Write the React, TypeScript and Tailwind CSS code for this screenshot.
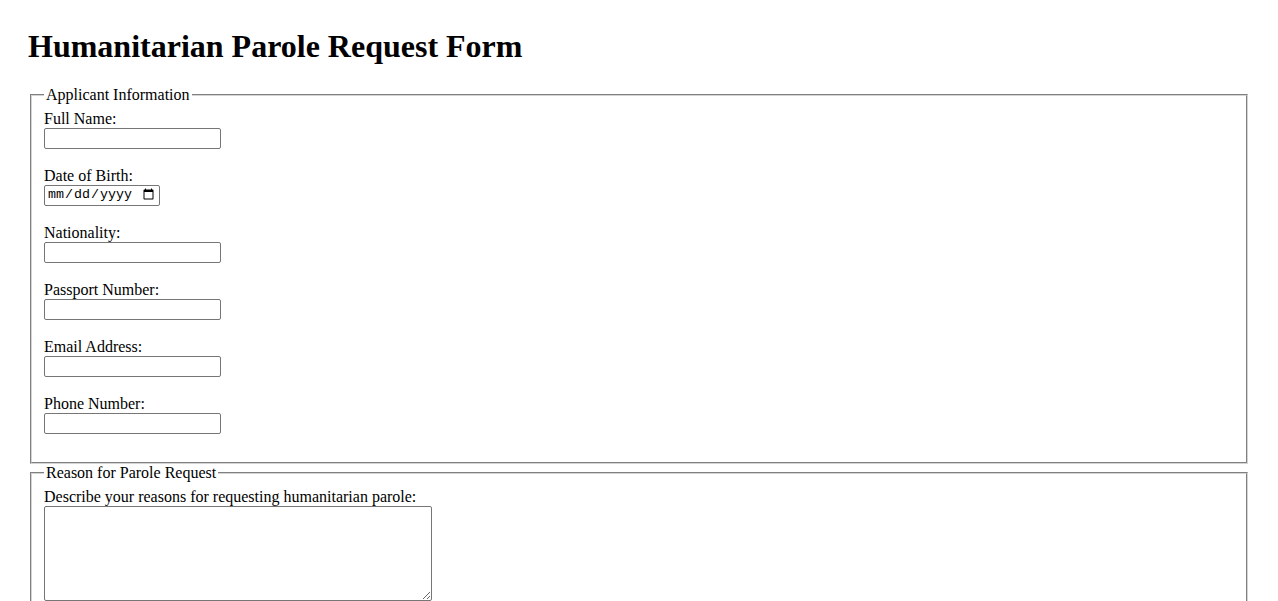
import { useState } from "react";

const APPLICANT_FIELDS = [
  { id: "fullName", label: "Full Name:", type: "text" },
  { id: "dob", label: "Date of Birth:", type: "date" },
  { id: "nationality", label: "Nationality:", type: "text" },
  { id: "passport", label: "Passport Number:", type: "text" },
  { id: "email", label: "Email Address:", type: "email" },
  { id: "phone", label: "Phone Number:", type: "tel" },
];

const inputBase =
  "-mt-px block h-[21px] rounded-[2px] border border-[#767676] bg-white px-[2px] py-[1px] text-[13.33px] text-black outline-none";

const fieldsetCls =
  "mx-[2px] border-2 border-[#d4d4d4] [border-style:groove] px-3 pt-[5.6px] pb-[10px]";

export default function App() {
  const [values, setValues] = useState<Record<string, string>>({});
  const [reason, setReason] = useState("");

  const set = (id: string, v: string) => setValues((s) => ({ ...s, [id]: v }));

  return (
    <div className="min-h-screen bg-white p-7 font-['Liberation_Serif',_'Times_New_Roman',_serif] text-[16px] leading-[18.4px] text-black">
      <h1 className="mb-[21.44px] text-[32px] leading-[36.8px] font-bold">
        Humanitarian Parole Request Form
      </h1>

      <form onSubmit={(e) => e.preventDefault()}>
        {/* Applicant */}
        <fieldset className={fieldsetCls}>
          <legend className="px-[2px]">Applicant Information</legend>
          {APPLICANT_FIELDS.map((f) => (
            <div key={f.id} className="mb-[18.6px]">
              <label htmlFor={f.id} className="block">
                {f.label}
              </label>
              {f.type === "date" ? (
                <input
                  id={f.id}
                  type="date"
                  value={values[f.id] ?? ""}
                  onChange={(e) => set(f.id, e.target.value)}
                  className={`${inputBase} w-[116px] font-['Liberation_Mono',_monospace]`}
                />
              ) : (
                <input
                  id={f.id}
                  type={f.type}
                  value={values[f.id] ?? ""}
                  onChange={(e) => set(f.id, e.target.value)}
                  className={`${inputBase} w-[177px] font-['Liberation_Sans',_Arial,_sans-serif]`}
                />
              )}
            </div>
          ))}
        </fieldset>

        {/* Reason */}
        <fieldset className={fieldsetCls}>
          <legend className="px-[2px]">Reason for Parole Request</legend>
          <label htmlFor="reason" className="block">
            Describe your reasons for requesting humanitarian parole:
          </label>
          <textarea
            id="reason"
            value={reason}
            onChange={(e) => setReason(e.target.value)}
            className="-mt-px block h-[95px] w-[388px] rounded-[2px] border border-[#767676] bg-white px-[2px] py-[2px] font-['Liberation_Mono',_monospace] text-[13.33px] outline-none"
          />
          <div className="h-[18px]" />
        </fieldset>
      </form>
    </div>
  );
}
